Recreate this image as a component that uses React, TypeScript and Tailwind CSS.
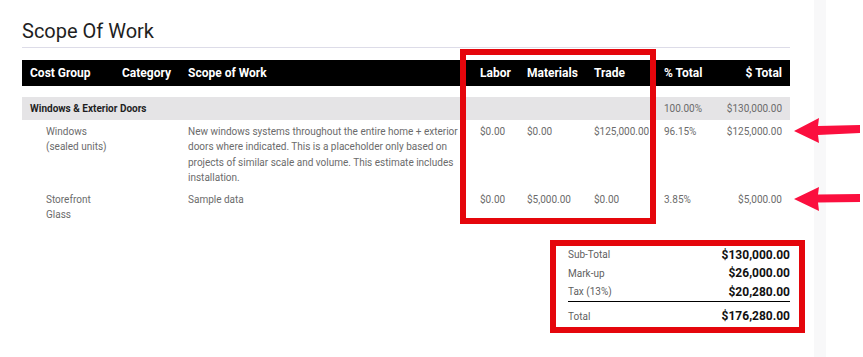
import React from "react";

const rows = [
  {
    name: "Windows (sealed units)",
    desc: "New windows systems throughout the entire home + exterior doors where indicated. This is a placeholder only based on projects of similar scale and volume. This estimate includes installation.",
    labor: "$0.00",
    materials: "$0.00",
    trade: "$125,000.00",
    pct: "96.15%",
    total: "$125,000.00",
  },
  {
    name: "Storefront Glass",
    desc: "Sample data",
    labor: "$0.00",
    materials: "$5,000.00",
    trade: "$0.00",
    pct: "3.85%",
    total: "$5,000.00",
  },
];

const grid =
  "grid grid-cols-[92px_66px_292px_47px_67px_70px_40px_1fr] px-[8px]";

export default function App() {
  return (
    <div className="relative flex h-[357px] w-[863px] overflow-hidden bg-white font-['Roboto',sans-serif]">
      <div className="w-[814px] pl-[22px] pr-[24px]">
        <div className="border-b border-[#dddce8] pt-[19px] pb-[4px] text-[20px] leading-[24px] text-[#1f1f1f]">
          Scope Of Work
        </div>

        <div
          className={`${grid} mt-[12px] h-[26px] items-center bg-black text-[12px] font-bold text-white`}
        >
          <div>Cost Group</div>
          <div>Category</div>
          <div>Scope of Work</div>
          <div>Labor</div>
          <div>Materials</div>
          <div>Trade</div>
          <div className="whitespace-nowrap">% Total</div>
          <div className="text-right">$ Total</div>
        </div>

        <div
          className={`${grid} mt-[11px] h-[23px] items-center bg-[#e5e4e6] text-[10px]`}
        >
          <div className="col-span-6 font-bold text-[#1f1f1f]">
            Windows &amp; Exterior Doors
          </div>
          <div className="text-[#6b6b6b]">100.00%</div>
          <div className="text-right text-[#6b6b6b]">$130,000.00</div>
        </div>

        {rows.map((r) => (
          <div
            key={r.name}
            className={`${grid} items-start pt-[4px] pb-[2px] text-[10px] leading-[15.4px] text-[#6b6b6b]`}
          >
            <div className="col-span-2 pl-[16px]">
              <div className="w-[64px]">{r.name}</div>
            </div>
            <div className="pr-[12px]">{r.desc}</div>
            <div>{r.labor}</div>
            <div>{r.materials}</div>
            <div className="whitespace-nowrap">{r.trade}</div>
            <div>{r.pct}</div>
            <div className="text-right">{r.total}</div>
          </div>
        ))}

        <div className="ml-auto mt-[21px] w-[222px]">
          <div className="flex h-[18.5px] items-center justify-between">
            <span className="text-[10px] text-[#5f5f5f]">Sub-Total</span>
            <span className="text-[12px] font-bold text-[#111]">
              $130,000.00
            </span>
          </div>
          <div className="flex h-[18.5px] items-center justify-between">
            <span className="text-[10px] text-[#5f5f5f]">Mark-up</span>
            <span className="text-[12px] font-bold text-[#111]">
              $26,000.00
            </span>
          </div>
          <div className="flex h-[18.5px] items-center justify-between">
            <span className="text-[10px] text-[#5f5f5f]">Tax (13%)</span>
            <span className="text-[12px] font-bold text-[#111]">
              $20,280.00
            </span>
          </div>
          <div className="h-[1.5px] bg-black" />
          <div className="mt-[5px] flex h-[18px] items-center justify-between">
            <span className="text-[10px] text-[#5f5f5f]">Total</span>
            <span className="text-[12px] font-bold text-[#111]">
              $176,280.00
            </span>
          </div>
        </div>
      </div>
      <div className="w-[12px] bg-[#f8f8f9]" />
      <div className="flex-1 bg-white" />

      {/* annotation boxes */}
      <div className="pointer-events-none absolute left-[460px] top-[49px] h-[175px] w-[196px] border-[6px] border-[#e5060c]" />
      <div className="pointer-events-none absolute left-[550px] top-[240px] h-[93px] w-[255px] border-[6px] border-[#e5060c]" />

      {/* annotation arrows */}
      <svg
        className="pointer-events-none absolute left-0 top-0"
        width="863"
        height="357"
        viewBox="0 0 863 357"
      >
        <polygon
          points="794,131 819,118 818,126 860,125 860,133 818,135 819,143"
          fill="#fb0f3e"
        />
        <polygon
          points="794,199 819,187 818,194.5 860,194 860,202 818,202.5 819,211"
          fill="#fb0f3e"
        />
      </svg>
    </div>
  );
}
